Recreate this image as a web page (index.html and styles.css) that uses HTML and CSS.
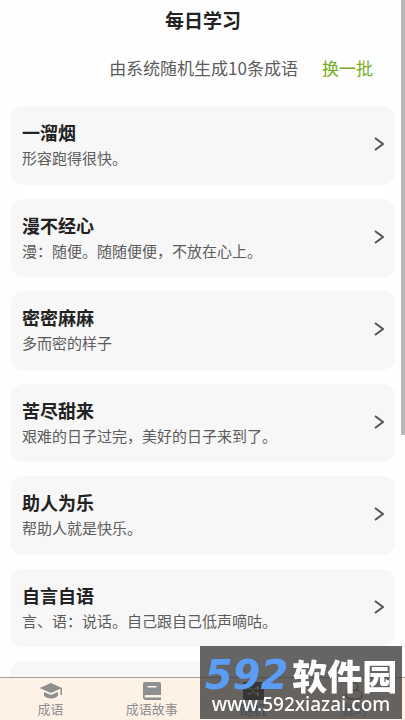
FILE: index.html
```html
<!DOCTYPE html>
<html lang="zh-CN">
<head>
<meta charset="utf-8">
<meta name="viewport" content="width=device-width, initial-scale=1">
<title>每日学习</title>
<link rel="stylesheet" href="styles.css">
</head>
<body>
<main class="page">
  <h1 class="page-title">每日学习</h1>
  <div class="toolbar">
    <span>由系统随机生成10条成语</span>
    <button class="refresh" type="button">换一批</button>
  </div>
  <div class="list">
    <a class="card" href="#"><span class="card-text"><strong class="word">一溜烟</strong><span class="meaning">形容跑得很快。</span></span><svg class="arrow" viewBox="0 0 10 14"><path d="M1 1l8 6-8 6"/></svg></a>
    <a class="card" href="#"><span class="card-text"><strong class="word">漫不经心</strong><span class="meaning">漫：随便。随随便便，不放在心上。</span></span><svg class="arrow" viewBox="0 0 10 14"><path d="M1 1l8 6-8 6"/></svg></a>
    <a class="card" href="#"><span class="card-text"><strong class="word">密密麻麻</strong><span class="meaning">多而密的样子</span></span><svg class="arrow" viewBox="0 0 10 14"><path d="M1 1l8 6-8 6"/></svg></a>
    <a class="card" href="#"><span class="card-text"><strong class="word">苦尽甜来</strong><span class="meaning">艰难的日子过完，美好的日子来到了。</span></span><svg class="arrow" viewBox="0 0 10 14"><path d="M1 1l8 6-8 6"/></svg></a>
    <a class="card" href="#"><span class="card-text"><strong class="word">助人为乐</strong><span class="meaning">帮助人就是快乐。</span></span><svg class="arrow" viewBox="0 0 10 14"><path d="M1 1l8 6-8 6"/></svg></a>
    <a class="card" href="#"><span class="card-text"><strong class="word">自言自语</strong><span class="meaning">言、语：说话。自己跟自己低声嘀咕。</span></span><svg class="arrow" viewBox="0 0 10 14"><path d="M1 1l8 6-8 6"/></svg></a>
    <div class="card card-next"></div>
  </div>
</main>
<div class="scrollbar"></div>
<nav class="tabs">
  <a class="tab" href="#">
    <svg class="tab-icon" viewBox="0 0 24 18"><path d="M12 1L.5 6 12 11l9.500-4.200V13H23V6z"/><path d="M5 10v3.800c1.800 2 4 2.700 7 2.700s5.200-.7 7-2.700V10l-7 3z"/></svg>
    <span>成语</span>
  </a>
  <a class="tab" href="#">
    <svg class="tab-icon" viewBox="0 0 24 18"><path fill-rule="evenodd" d="M5 0h14q2 0 2 2v11H6q-1.500 0-1.500 1.200T6 15.500h15V18H6q-3 0-3-3V2q0-2 2-2zm2.500 4v1.500h9V4z"/></svg>
    <span>成语故事</span>
  </a>
  <a class="tab tab-active" href="#">
    <svg class="tab-icon" viewBox="0 0 24 18"><rect x="2" y="0" width="21" height="18" rx="2"/><path class="shuffle" d="M6.500 6h3l5 6h3.500M6.500 12h3l1.500-2M13 7.500L14.500 6H18M16 4l2 2-2 2M16 10l2 2-2 2"/></svg>
    <span>随机</span>
  </a>
  <a class="tab" href="#">
    <svg class="tab-icon tab-outline" viewBox="0 0 24 18"><circle cx="12" cy="4.500" r="4"/><path d="M9 8C5 9.500 4 11 4 13.500Q4 17 8 17h8q4 0 4-3.500c0-2.500-1-4-5-5.500"/></svg>
    <span>我的</span>
  </a>
</nav>
<aside class="watermark">
  <div class="brand"><span class="brand-number">592</span><span class="brand-name">软件园</span></div>
  <div class="site">www.592xiazai.com</div>
</aside>
</body>
</html>
```
FILE: styles.css
```css
* {
  box-sizing: border-box;
}

body {
  margin: 0;
  height: 100vh;
  overflow: hidden;
  background: #fefefe;
  color: #222;
  font-family: "Noto Sans CJK SC", sans-serif;
  line-height: 1.5;
}

.page {
  padding: 5px 10px 0 11px;
}

.page-title {
  margin: 0;
  font-size: 19px;
  line-height: 30px;
  text-align: center;
  font-weight: 700;
}

.toolbar {
  display: flex;
  justify-content: flex-end;
  align-items: center;
  gap: 24px;
  height: 65px;
  padding-right: 22px;
  color: #5c5c5c;
  font-size: 17px;
}

.refresh {
  padding: 0;
  border: 0;
  background: none;
  color: #73ac1b;
  font: inherit;
}

.list {
  display: flex;
  flex-direction: column;
  gap: 14px;
  padding-top: 6px;
}

.card {
  display: flex;
  align-items: center;
  justify-content: space-between;
  padding: 13px 11px 15px;
  border-radius: 12px;
  background: #f7f7f7;
  text-decoration: none;
}

.card-next {
  min-height: 78px;
}

.card-text {
  display: grid;
  gap: 1px;
}

.word {
  color: #222;
  font-size: 18px;
}

.meaning {
  color: #5c5c5c;
  font-size: 15px;
}

.arrow {
  width: 10px;
  height: 14px;
  fill: none;
  stroke: #555;
  stroke-width: 2;
}

.scrollbar {
  position: fixed;
  top: 0;
  right: 0;
  width: 4px;
  height: 60.4vh;
  background: #b8b8b8;
}

.tabs {
  position: fixed;
  right: 0;
  bottom: 0;
  left: 0;
  display: grid;
  grid-template-columns: repeat(4, 1fr);
  height: 43px;
  padding-top: 4px;
  border-top: 1px solid #a69d94;
  background: #fef1e5;
}

.tab {
  display: flex;
  flex-direction: column;
  align-items: center;
  color: #8f8f8f;
  font-size: 13px;
  line-height: 18px;
  text-decoration: none;
}

.tab-icon {
  width: 24px;
  height: 18px;
  fill: currentColor;
}

.tab-active {
  color: #2f6f9c;
}

.tab-active .tab-icon {
  fill: #111;
}

.tab-icon .shuffle {
  fill: none;
  stroke: #fef1e5;
  stroke-width: 1;
}

.tab-outline {
  fill: none;
  stroke: #333;
  stroke-width: 1;
}

.watermark {
  position: fixed;
  right: 3px;
  bottom: 1px;
  width: 202px;
  height: 73px;
  padding-top: 10px;
  background: rgba(62, 62, 62, 0.8);
  color: #fff;
  text-align: center;
}

.brand {
  display: flex;
  justify-content: center;
  align-items: center;
  gap: 4px;
  height: 38px;
  white-space: nowrap;
}

.brand-number {
  color: #5b9df5;
  font: italic 700 40px "DejaVu Sans", sans-serif;
}

.brand-name {
  font-size: 35px;
  font-weight: 900;
}

.site {
  font: 500 19px/20px "Noto Sans", sans-serif;
}
```
